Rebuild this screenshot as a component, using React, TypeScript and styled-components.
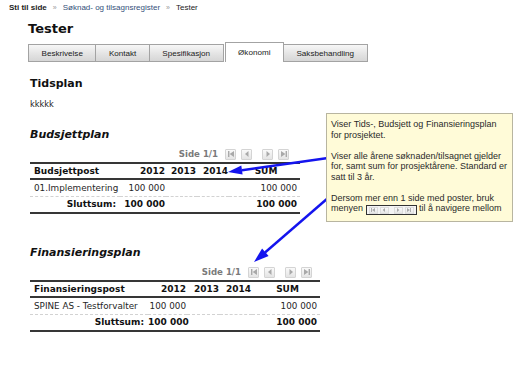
import styled, { createGlobalStyle } from "styled-components";

const GlobalStyle = createGlobalStyle`
  html, body {
    margin: 0;
    padding: 0;
    background: #ffffff;
  }
  body {
    font-family: "DejaVu Sans", Verdana, sans-serif;
    color: #222;
  }
`;

type Row = { post: string; y2012: string; y2013: string; y2014: string; sum: string };

const budget: Row[] = [
  { post: "01.Implementering", y2012: "100 000", y2013: "", y2014: "", sum: "100 000" },
];
const finance: Row[] = [
  { post: "SPINE AS - Testforvalter", y2012: "100 000", y2013: "", y2014: "", sum: "100 000" },
];

const tabs = ["Beskrivelse", "Kontakt", "Spesifikasjon", "Økonomi", "Saksbehandling"];

const NavIcon = ({ kind }: { kind: "first" | "prev" | "next" | "last" }) => (
  <svg width="6" height="6" viewBox="0 0 6 6">
    {kind === "first" && (
      <>
        <rect x="0" y="0" width="1.4" height="6" fill="#a9a9a9" />
        <polygon points="6,0 1.6,3 6,6" fill="#a9a9a9" />
      </>
    )}
    {kind === "prev" && <polygon points="4.5,0 1,3 4.5,6" fill="#a9a9a9" />}
    {kind === "next" && <polygon points="1.5,0 5,3 1.5,6" fill="#a9a9a9" />}
    {kind === "last" && (
      <>
        <polygon points="0,0 4.4,3 0,6" fill="#a9a9a9" />
        <rect x="4.6" y="0" width="1.4" height="6" fill="#a9a9a9" />
      </>
    )}
  </svg>
);

const Pager = ({ width, inset }: { width: number; inset: number }) => (
  <PagerRow $width={width} $inset={inset}>
    <PageLabel>Side 1/1</PageLabel>
    <NavButton><NavIcon kind="first" /></NavButton>
    <NavButton><NavIcon kind="prev" /></NavButton>
    <NavButton $spaced><NavIcon kind="next" /></NavButton>
    <NavButton><NavIcon kind="last" /></NavButton>
  </PagerRow>
);

const PlanTable = ({
  title,
  widths,
  rows,
}: {
  title: string;
  widths: number[];
  rows: Row[];
}) => (
  <Table $w={widths.reduce((a, b) => a + b, 0)}>
    <colgroup>
      {widths.map((w, i) => (
        <Col key={i} $w={w} />
      ))}
    </colgroup>
    <thead>
      <HeadRow>
        <PostCell as="th">{title}</PostCell>
        <NumCell as="th">2012</NumCell>
        <NumCell as="th">2013</NumCell>
        <NumCell as="th">2014</NumCell>
        <SumHead>SUM</SumHead>
      </HeadRow>
    </thead>
    <tbody>
      {rows.map((r) => (
        <DataRow key={r.post}>
          <PostCell>{r.post}</PostCell>
          <NumCell>{r.y2012}</NumCell>
          <NumCell>{r.y2013}</NumCell>
          <NumCell>{r.y2014}</NumCell>
          <SumCell>{r.sum}</SumCell>
        </DataRow>
      ))}
      <TotalRow>
        <PostCell $right>Sluttsum:</PostCell>
        <NumCell>100 000</NumCell>
        <NumCell />
        <NumCell />
        <SumCell>100 000</SumCell>
      </TotalRow>
    </tbody>
  </Table>
);

const App = () => {
  return (
    <Page>
      <GlobalStyle />
      <Breadcrumb>
        <strong>Sti til side</strong>
        <Sep>»</Sep>
        <CrumbLink>Søknad- og tilsagnsregister</CrumbLink>
        <Sep>»</Sep>
        <span>Tester</span>
      </Breadcrumb>

      <Content>
        <PageTitle>Tester</PageTitle>
        <TabBar>
          {tabs.map((t) => (
            <Tab key={t} $active={t === "Økonomi"}>
              {t}
            </Tab>
          ))}
        </TabBar>

        <SectionTitle>Tidsplan</SectionTitle>
        <Plain>kkkkk</Plain>

        <SectionTitle $italic $top={19}>Budsjettplan</SectionTitle>
        <Pager width={272} inset={11} />
        <PlanTable title="Budsjettpost" widths={[90, 46, 31, 32, 71]} rows={budget} />

        <SectionTitle $italic $top={32}>Finansieringsplan</SectionTitle>
        <Pager width={290} inset={6} />
        <PlanTable title="Finansieringspost" widths={[118, 39, 33, 32, 68]} rows={finance} />
      </Content>

      <Arrows width="521" height="390" viewBox="0 0 521 390">
        <line x1="328" y1="158" x2="242" y2="170.2" stroke="#1414ee" strokeWidth="2.4" />
        <polygon points="228,172 241.3,165.6 242.6,174.6" fill="#1414ee" />
        <line x1="328" y1="198" x2="265" y2="252.5" stroke="#1414ee" strokeWidth="2.4" />
        <polygon points="254,262 262.1,248.4 268.6,256" fill="#1414ee" />
      </Arrows>

      <Tip>
        <TipPara>
          Viser Tids-, Budsjett og Finansieringsplan
          <br />
          for prosjektet.
        </TipPara>
        <TipPara>
          Viser alle årene søknaden/tilsagnet gjelder
          <br />
          for, samt sum for prosjektårene. Standard er
          <br />
          satt til 3 år.
        </TipPara>
        <TipPara>
          Dersom mer enn 1 side med poster, bruk
          <br />
          menyen{" "}
          <MiniPager>
            <MiniButton><NavIcon kind="first" /></MiniButton>
            <MiniButton><NavIcon kind="prev" /></MiniButton>
            <MiniButton $spaced><NavIcon kind="next" /></MiniButton>
            <MiniButton><NavIcon kind="last" /></MiniButton>
          </MiniPager>{" "}
          til å navigere mellom
        </TipPara>
      </Tip>
    </Page>
  );
};

export default App;

const Page = styled.div`
  position: relative;
  width: 521px;
  height: 390px;
  overflow: hidden;
  background: #fff;
`;

const Breadcrumb = styled.div`
  display: flex;
  align-items: center;
  gap: 5px;
  height: 10px;
  padding: 3px 0 0 9px;
  font-family: "Liberation Sans", Arial, sans-serif;
  font-size: 8px;
  line-height: 10px;
  color: #222;
`;

const Sep = styled.span`
  color: #999;
  font-size: 7px;
  margin: 0 1px;
`;

const CrumbLink = styled.span`
  color: #34507a;
`;

const Content = styled.div`
  padding-left: 28px;
`;

const PageTitle = styled.h1`
  margin: 8px 0 0 0;
  font-size: 13px;
  line-height: 16px;
  font-weight: bold;
  color: #111;
`;

const TabBar = styled.div`
  display: flex;
  align-items: flex-end;
  height: 20px;
  margin: 5px 0 0 1px;
`;

const Tab = styled.div<{ $active?: boolean }>`
  display: flex;
  align-items: center;
  justify-content: center;
  height: ${(p) => (p.$active ? 20 : 18)}px;
  padding: 0 12.5px;
  margin-left: ${(p) => (p.$active ? 1 : -1)}px;
  border: 1px solid #a3a3a3;
  border-bottom: ${(p) => (p.$active ? "none" : "1px solid #a3a3a3")};
  background: ${(p) =>
    p.$active ? "#ffffff" : "linear-gradient(#f7f7f7, #e2e2e2 60%, #d6d6d6)"};
  font-family: "Liberation Sans", Tahoma, sans-serif;
  font-size: 8.1px;
  color: #222;
  box-sizing: border-box;
`;

const SectionTitle = styled.h2<{ $italic?: boolean; $top?: number }>`
  margin: ${(p) => p.$top ?? 15}px 0 0 2px;
  font-size: 11px;
  line-height: 13px;
  font-weight: bold;
  font-style: ${(p) => (p.$italic ? "italic" : "normal")};
  color: #111;
`;

const Plain = styled.div`
  margin: 9px 0 0 2px;
  font-size: 8.2px;
  line-height: 10px;
  color: #222;
`;

const PagerRow = styled.div<{ $width: number; $inset: number }>`
  display: flex;
  align-items: center;
  justify-content: flex-end;
  gap: 5px;
  height: 12px;
  margin-top: 7px;
  margin-bottom: 2px;
  width: ${(p) => p.$width}px;
  padding-right: ${(p) => p.$inset}px;
  box-sizing: border-box;
`;

const PageLabel = styled.span`
  font-size: 8.6px;
  font-weight: bold;
  color: #7a7a7a;
  margin-right: 2px;
`;

const NavButton = styled.span<{ $spaced?: boolean }>`
  display: inline-flex;
  align-items: center;
  justify-content: center;
  width: 11px;
  height: 11px;
  box-sizing: border-box;
  border: 1px solid #d4d4d4;
  border-radius: 1px;
  background: linear-gradient(#fafafa, #e4e4e4);
  margin-left: ${(p) => (p.$spaced ? 5 : 0)}px;
`;

const Table = styled.table<{ $w: number }>`
  width: ${(p) => p.$w}px;
  margin-left: 2px;
  table-layout: fixed;
  border-collapse: collapse;
  font-size: 8.8px;
  color: #262626;
  white-space: nowrap;
`;

const Col = styled.col<{ $w: number }>`
  width: ${(p) => p.$w}px;
`;

const HeadRow = styled.tr`
  height: 16px;
  border-top: 2px solid #363636;
  border-bottom: 2px solid #363636;
  th {
    font-weight: bold;
    font-size: 9px;
    color: #111;
  }
`;

const DataRow = styled.tr`
  height: 17px;
  border-bottom: 1px dashed #d2d2d2;
`;

const TotalRow = styled.tr`
  height: 17px;
  border-bottom: 2px solid #363636;
  td {
    font-weight: bold;
    font-size: 9px;
    color: #111;
  }
`;

const PostCell = styled.td<{ $right?: boolean }>`
  padding: 0 4px;
  text-align: ${(p) => (p.$right ? "right" : "left")};
`;

const NumCell = styled.td`
  padding: 0 1px 0 0;
  text-align: right;
`;

const SumHead = styled.th`
  padding: 0 3px 0 6px;
  text-align: center;
`;

const SumCell = styled.td`
  padding: 0 3px 0 6px;
  text-align: right;
`;

const Arrows = styled.svg`
  position: absolute;
  left: 0;
  top: 0;
  pointer-events: none;
`;

const Tip = styled.div`
  position: absolute;
  left: 326px;
  top: 113px;
  width: 187px;
  height: 109px;
  box-sizing: border-box;
  padding: 5px 4px;
  background: #fffbd8;
  border: 1px solid #b8b5a0;
  font-family: "Liberation Sans", Arial, sans-serif;
  font-size: 9px;
  line-height: 10.5px;
  color: #2a2a2a;
  white-space: nowrap;
`;

const TipPara = styled.p`
  margin: 0 0 10.5px 0;
  &:last-child {
    margin-bottom: 0;
  }
`;

const MiniPager = styled.span`
  display: inline-flex;
  align-items: center;
  gap: 2px;
  height: 8px;
  padding: 0 2px;
  border: 1.5px solid #333;
  background: #f4f4f4;
  vertical-align: -1px;
`;

const MiniButton = styled.span<{ $spaced?: boolean }>`
  display: inline-flex;
  align-items: center;
  justify-content: center;
  width: 9px;
  height: 7px;
  box-sizing: border-box;
  border: 1px solid #ddd;
  background: linear-gradient(#fafafa, #e6e6e6);
  margin-left: ${(p) => (p.$spaced ? 3 : 0)}px;
  svg {
    width: 4px;
    height: 4px;
  }
`;
